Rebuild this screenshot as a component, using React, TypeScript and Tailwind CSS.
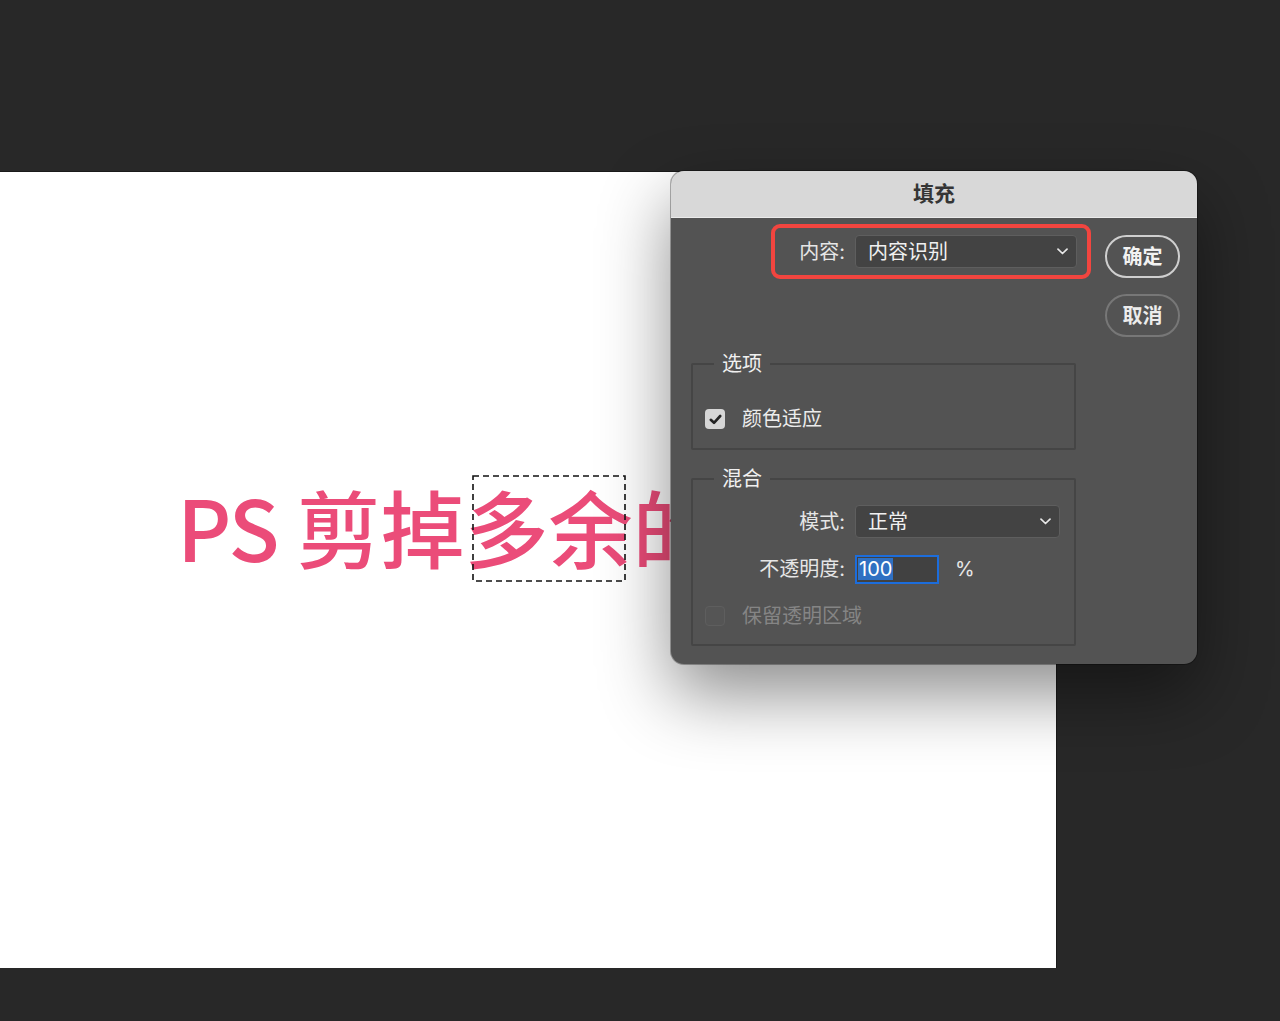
import React from "react"

const cjk = "font-['Inter','Noto_Sans_CJK_SC',sans-serif]"

function Chevron() {
  return (
    <svg width="11" height="7" viewBox="0 0 11 7" fill="none" className="shrink-0">
      <path d="M1 1.2 5.5 5.5 10 1.2" stroke="#e8e8e8" strokeWidth="1.7" strokeLinecap="round" strokeLinejoin="round" />
    </svg>
  )
}

function Select({ value, className }: { value: string; className: string }) {
  return (
    <div
      className={`flex items-center justify-between rounded-[4px] border border-[#5e5e5e] bg-[#434343] pl-[12px] pr-[8px] text-[20px] text-[#f0f0f0] ${className}`}
    >
      <span>{value}</span>
      <Chevron />
    </div>
  )
}

function Checkbox({ checked, label, disabled }: { checked?: boolean; label: string; disabled?: boolean }) {
  return (
    <div className="ml-[12px] flex items-center gap-[17px]">
      {checked ? (
        <div className="flex h-[20px] w-[20px] items-center justify-center rounded-[4px] bg-[#d6d6d6]">
          <svg width="13" height="11" viewBox="0 0 13 11" fill="none">
            <path d="M1.8 5.8 5 8.8 11.2 2" stroke="#232323" strokeWidth="2.6" strokeLinecap="round" strokeLinejoin="round" />
          </svg>
        </div>
      ) : (
        <div className="h-[20px] w-[20px] rounded-[4px] border border-[#5e5e5e] bg-[#555555]" />
      )}
      <span className={`text-[20px] leading-[26px] ${disabled ? "text-[#858585]" : "text-[#ececec]"}`}>{label}</span>
    </div>
  )
}

function Group({ title, children, className }: { title: string; children: React.ReactNode; className?: string }) {
  return (
    <fieldset className={`w-[385px] rounded-[2px] border-2 border-[#454545] ${className ?? ""}`}>
      <legend className="ml-[21px] px-2 text-[20px] leading-[26px] text-[#f0f0f0]">{title}</legend>
      {children}
    </fieldset>
  )
}

function Dialog() {
  return (
    <div className="absolute left-[671px] top-[171px] flex w-[526px] flex-col overflow-hidden rounded-[13px] bg-[#535353] shadow-[0_30px_70px_rgba(0,0,0,0.45)] ring-1 ring-black/30">
      <div className="flex h-[47px] items-center justify-center border-b border-[#ebebeb] bg-[#d8d8d8] text-[21px] font-bold text-[#353535]">
        填充
      </div>
      <div className="flex pb-[18px] pl-[20px] pt-[6px]">
        <div className="flex w-[400px] flex-col">
          <div className="ml-auto flex h-[55px] w-[320px] items-center justify-end gap-[10px] rounded-[9px] border-4 border-[#f2453f] pr-[10px]">
            <span className="text-[20px] text-[#e6e6e6]">内容:</span>
            <Select value="内容识别" className="h-[33px] w-[222px]" />
          </div>

          <Group title="选项" className="mt-[72px]">
            <div className="pb-[16px] pt-[29px]">
              <Checkbox checked label="颜色适应" />
            </div>
          </Group>

          <Group title="混合" className="mt-[16px]">
            <div className="flex flex-col pb-[15px] pt-[13px]">
              <div className="flex items-center gap-[10px]">
                <span className="w-[152px] text-right text-[20px] text-[#e6e6e6]">模式:</span>
                <Select value="正常" className="h-[33px] w-[205px]" />
              </div>
              <div className="mt-[16px] flex items-center gap-[10px]">
                <span className="w-[152px] text-right text-[20px] text-[#e6e6e6]">不透明度:</span>
                <div className="flex h-[29px] w-[84px] items-center border-2 border-[#1c6ddc] bg-[#414141] pl-[1px]">
                  <span className="bg-[#2f70c2] px-[1px] text-[20px] leading-[22px] text-white">100</span>
                </div>
                <span className="ml-[6px] text-[20px] text-[#e6e6e6]">%</span>
              </div>
              <div className="mt-[19px]">
                <Checkbox label="保留透明区域" disabled />
              </div>
            </div>
          </Group>
        </div>

        <div className="ml-[14px] flex flex-col gap-[16px] pt-[11px]">
          <button className="h-[43px] w-[75px] rounded-full border-2 border-[#cfcfcf] text-[20px] font-semibold text-[#f2f2f2]">
            确定
          </button>
          <button className="h-[43px] w-[75px] rounded-full border-2 border-[#777777] text-[20px] font-semibold text-[#ececec]">
            取消
          </button>
        </div>
      </div>
    </div>
  )
}

export default function App() {
  return (
    <div className={`relative h-[1021px] w-full overflow-hidden bg-[#282828] pt-[171px] ${cjk}`}>
      <div className="relative h-[797px] w-[1057px] border-r border-t border-[#1a1a1a] bg-white">
        <div className="pl-[177px] pt-[312px] font-['Noto_Sans_CJK_SC',sans-serif] text-[84px] font-medium leading-none whitespace-nowrap text-[#eb4c79]">
          <span className="tracking-[-2px]">PS</span> 剪掉多余的文字
        </div>
        <svg className="absolute left-[472px] top-[303px]" width="154" height="107" viewBox="0 0 154 107" fill="none">
          <rect x="1" y="1" width="152" height="105" stroke="#111" strokeWidth="1.6" strokeDasharray="6 4" />
        </svg>
      </div>
      <Dialog />
    </div>
  )
}
